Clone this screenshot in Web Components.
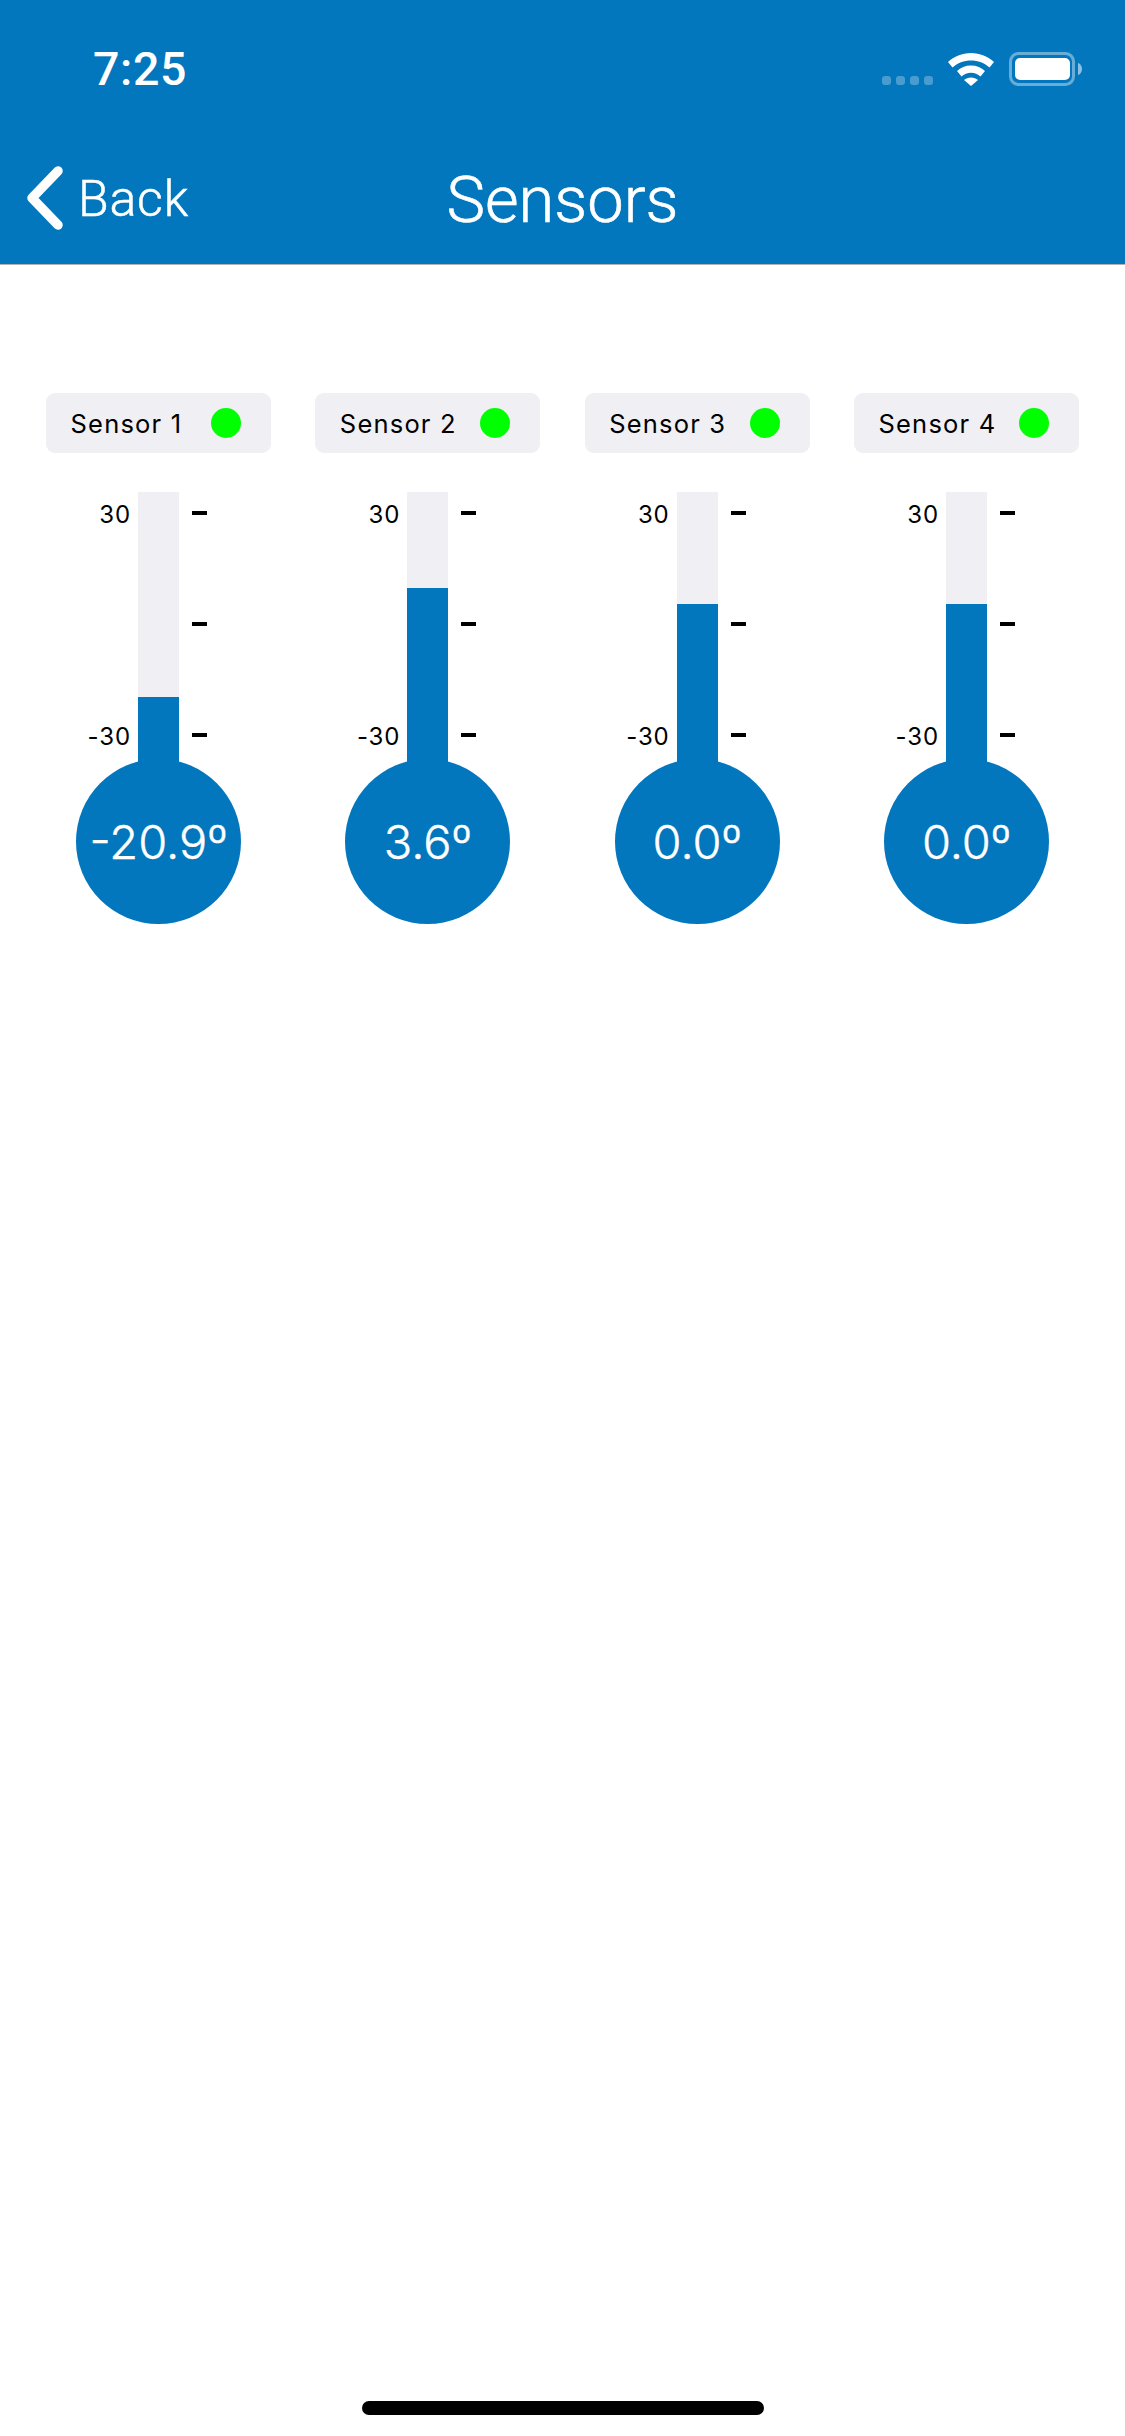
<!DOCTYPE html>
<html><head><meta charset="utf-8"><style>
html,body{margin:0;background:#fff}
</style></head><body>
<app-shell>
<nav-header title="Sensors" time="7:25"></nav-header>
<sensor-grid>
<sensor-card name="Sensor 1" value="-20.9º" level="73"></sensor-card>
<sensor-card name="Sensor 2" value="3.6º" level="182"></sensor-card>
<sensor-card name="Sensor 3" value="0.0º" level="166"></sensor-card>
<sensor-card name="Sensor 4" value="0.0º" level="166"></sensor-card>
</sensor-grid>
</app-shell>
<script>
class AppShell extends HTMLElement{constructor(){super();this.attachShadow({mode:'open'}).innerHTML=`<style>
:host{display:flex;flex-direction:column;height:2436px;overflow:hidden;background:#fff}
.main{flex:1}
.home{height:14px;width:402px;border-radius:7px;background:#000;margin:0 auto 21px;align-self:center}
</style><div class="main"><slot></slot></div><div class="home"></div>`}}
class NavHeader extends HTMLElement{constructor(){super();const t=this.getAttribute('title'),c=this.getAttribute('time');this.removeAttribute('title');this.attachShadow({mode:'open'}).innerHTML=`<style>
:host{display:block;background:#0277BD;color:#fff;height:264px;font-family:Roboto,sans-serif;border-bottom:1px solid #b2b2b2;box-sizing:content-box}
.status{height:104px;display:flex;align-items:flex-start;padding:0 43px 0 93px}
.time{font-size:46.500px;font-weight:500;line-height:44px;margin-top:47px;letter-spacing:.6px;flex:1}
.dots{display:flex;gap:5px;margin-top:76px;margin-right:15px}
.dots i{width:9px;height:9px;border-radius:3px;background:#fff;opacity:.28}
.wifi{margin-top:53px;margin-right:15px;display:block}
.batt{margin-top:52px;display:block}
.nav{height:160px;display:grid;grid-template-columns:1fr auto 1fr;align-items:start}
.back{display:flex;align-items:flex-start;padding-left:27px;font-size:50px;font-weight:300;line-height:50px}
.back svg{display:block;margin-top:62px}
.back span{margin-top:70px;margin-left:15px;letter-spacing:.8px;-webkit-text-stroke:.5px #fff}
.title{font-size:65px;font-weight:300;line-height:70px;margin-top:61px;-webkit-text-stroke:.6px #fff}
</style>
<div class="status"><span class="time">${c}</span><span class="dots"><i></i><i></i><i></i><i></i></span>
<svg class="wifi" width="46" height="33" viewBox="0 0 46 33"><path fill="#fff" d="M23 0C14 0 6 3.500 0 9l4.500 5.500C9.500 10 16 7.500 23 7.500S36.500 10 41.500 14.500L46 9C40 3.500 32 0 23 0Z"/><path fill="#fff" d="M23 12.500c-5.500 0-10.500 2-14 5.500l4.500 5.500c2.500-2.300 6-3.700 9.500-3.700s7 1.400 9.500 3.700L37 18c-3.500-3.500-8.500-5.500-14-5.500Z"/><path fill="#fff" d="M23 24.500c-2.700 0-5.200 1-7 2.600L23 33l7-5.900c-1.800-1.600-4.300-2.600-7-2.600Z"/></svg>
<svg class="batt" width="73" height="34" viewBox="0 0 73 34"><rect x="1.500" y="1.500" width="63" height="31" rx="8" fill="none" stroke="#fff" stroke-opacity=".4" stroke-width="3"/><rect x="6" y="6" width="55" height="22" rx="5" fill="#fff"/><path d="M69 11c2.500 .8 4 3 4 6s-1.500 5.200-4 6Z" fill="#fff" fill-opacity=".55"/></svg></div>
<div class="nav"><div class="back"><svg width="36" height="64" viewBox="0 0 36 64"><path d="M31 5 5 32l26 27" fill="none" stroke="#fff" stroke-width="9.500" stroke-linecap="round" stroke-linejoin="round"/></svg><span>Back</span></div><div class="title">${t}</div><div></div></div>`}}
class SensorGrid extends HTMLElement{constructor(){super();this.attachShadow({mode:'open'}).innerHTML=`<style>
:host{display:grid;grid-template-columns:repeat(4,225px);column-gap:44.33px;padding:128px 46px 0;justify-content:start}
</style><slot></slot>`}}
class SensorCard extends HTMLElement{constructor(){super();const n=this.getAttribute('name'),v=this.getAttribute('value'),l=this.getAttribute('level');this.attachShadow({mode:'open'}).innerHTML=`<style>
:host{display:flex;flex-direction:column;align-items:center;font-family:Inter,sans-serif;color:#000}
.chip{box-sizing:border-box;width:225px;height:60px;background:#EFEFF4;border-radius:9px;display:flex;align-items:center;justify-content:space-between;padding:0 30px 0 24.500px;font-size:25.500px;letter-spacing:1.200px;line-height:30px}
.chip span:first-child{position:relative;top:1px}
.dot{width:30px;height:30px;border-radius:50%;background:#00FF00}
.scale{display:grid;grid-template-columns:41px;justify-content:center;margin-top:39px;position:relative;height:278px}
.track{position:relative;background:#EFEFF4;height:278px;width:41px}
.fill{position:absolute;left:0;right:0;bottom:0;background:#0277BD}
.labels{position:absolute;right:48px;top:4px;height:260px;display:flex;flex-direction:column;justify-content:space-between;align-items:flex-end;font-size:24px;line-height:38px;letter-spacing:.9px}
.ticks{position:absolute;left:54px;top:19px;height:226px;width:15px;display:flex;flex-direction:column;justify-content:space-between}
.ticks i{display:block;height:4px;background:#000}
.bulb{width:165px;height:165px;border-radius:50%;background:#0277BD;color:#fff;display:flex;align-items:center;justify-content:center;font-size:47px;font-weight:300;-webkit-text-stroke:.4px #fff;margin-top:-11px;position:relative;white-space:nowrap}
</style><div class="chip"><span>${n}</span><span class="dot"></span></div>
<div class="scale"><div class="labels"><span>30</span><span>-30</span></div><div class="track"><div class="fill" style="height:${l}px"></div></div><div class="ticks"><i></i><i></i><i></i></div></div>
<div class="bulb">${v}</div>`}}
customElements.define('app-shell',AppShell);customElements.define('nav-header',NavHeader);customElements.define('sensor-grid',SensorGrid);customElements.define('sensor-card',SensorCard);
</script></body></html>
